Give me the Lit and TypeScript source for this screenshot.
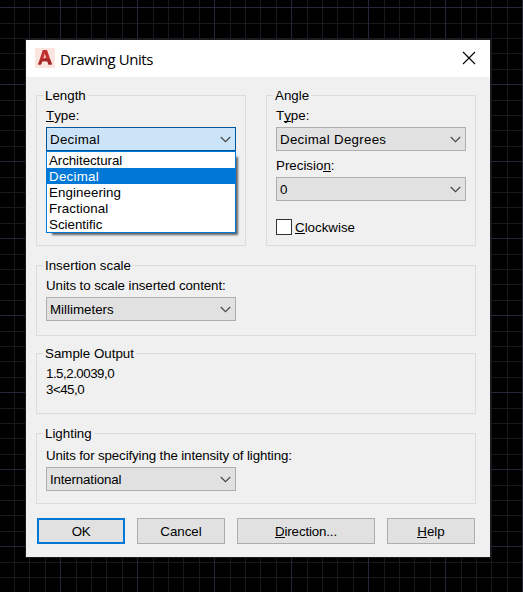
import { LitElement, html, css, svg, nothing } from "lit";
import { customElement, property } from "lit/decorators.js";

/** Renders a caption whose mnemonic letter follows an ampersand. */
const caption = (text: string) => {
  const at = text.indexOf("&");
  if (at < 0) return html`${text}`;
  return html`${text.slice(0, at)}<u>${text[at + 1]}</u>${text.slice(at + 2)}`;
};

/** Per-string letter spacing, in pixels, imitating hinted GDI advances. */
const tracking: Record<string, number> = {
  Decimal: 0.27,
  "Decimal Degrees": 0.27,
  Architectural: -0.07,
  Engineering: 0.08,
  Fractional: 0.07,
  International: -0.16,
};
const spaced = (text: string) =>
  html`<span class="text" style="letter-spacing:${tracking[text] ?? 0}px">${text}</span>`;

@customElement("group-box")
class GroupBox extends LitElement {
  @property() label = "";
  static styles = css`
    :host {
      display: block;
      box-sizing: border-box;
      border: 1px solid #dcdcdc;
      padding: 0 9px;
    }
    .legend {
      display: table;
      height: 16px;
      line-height: 16px;
      margin: -8px 0 4px -3px;
      padding: 0 2px;
      background: #f0f0f0;
      white-space: nowrap;
    }
  `;
  render() {
    return html`<div class="legend">${this.label}</div><slot></slot>`;
  }
}

@customElement("combo-box")
class ComboBox extends LitElement {
  @property() value = "";
  @property({ type: Array }) options: string[] = [];
  @property({ type: Boolean, reflect: true }) open = false;
  static styles = css`
    :host {
      display: block;
      position: relative;
      width: 190px;
      height: 24px;
    }
    .field {
      box-sizing: border-box;
      height: 24px;
      display: flex;
      align-items: center;
      justify-content: space-between;
      padding: 0 4px 0 3px;
      border: 1px solid #adadad;
      background: #e1e1e1;
      line-height: 16px;
    }
    .field .text {
      padding-top: 2px;
    }
    :host([open]) .field {
      border-color: #005499;
      background: #cce4f7;
    }
    .list {
      position: absolute;
      z-index: 1;
      top: 24px;
      left: 0;
      right: 0;
      border: 1px solid #0078d7;
      background: #fff;
      box-shadow: 4px 4px 2px -2px rgba(0, 0, 0, 0.6);
    }
    .item {
      height: 16px;
      line-height: 17px;
      padding-left: 2px;
    }
    .selected {
      background: #0078d7;
      color: #fff;
    }
  `;
  render() {
    return html`
      <div class="field">
        ${spaced(this.value)}
        <svg width="11" height="7" viewBox="0 0 11 7">
          <path d="M.8 1 5.5 5.7 10.2 1" fill="none" stroke="#444" stroke-width="1.1" />
        </svg>
      </div>
      ${this.open
        ? html`<div class="list">
            ${this.options.map(
              (o) => html`<div class="item ${o === this.value ? "selected" : ""}">${spaced(o)}</div>`
            )}
          </div>`
        : nothing}
    `;
  }
}

@customElement("app-root")
class AppRoot extends LitElement {
  static styles = css`
    :host {
      display: block;
      position: relative;
      box-sizing: border-box;
      width: 523px;
      height: 592px;
      overflow: hidden;
      padding: 40px 0 0 26px;
      background: #000;
      color: #000;
      font: 13.33px "Liberation Sans", Arial, sans-serif;
    }
    u {
      display: inline-block;
      height: 14px;
      line-height: 16px;
      vertical-align: top;
      text-decoration: none;
      box-shadow: inset 0 -1px 0 #000;
    }
    .canvas {
      position: absolute;
      inset: 0;
    }
    .dialog {
      position: relative;
      box-sizing: border-box;
      width: 464px;
      height: 517px;
      background: #f0f0f0;
      box-shadow: 0 0 0 1px #1b1c1e;
    }
    .title {
      box-sizing: border-box;
      height: 37px;
      display: flex;
      align-items: center;
      background: #fff;
      padding: 0 14px 1px 9px;
    }
    .name {
      flex: 1;
      margin-left: 5px;
      padding-top: 1px;
      font: 15px/20px "Open Sans", "Noto Sans", sans-serif;
      letter-spacing: -0.42px;
    }
    .body {
      display: grid;
      grid-template-columns: 210px 210px;
      grid-template-rows: 151px 90px 78px 90px 41px;
      column-gap: 20px;
      padding: 18px 10px 0;
    }
    .wide {
      grid-column: 1 / 3;
    }
    .insertion,
    .lighting {
      margin-top: 19px;
      height: 71px;
    }
    .sample {
      margin-top: 17px;
      height: 61px;
    }
    .label {
      height: 16px;
      line-height: 16px;
      margin-bottom: 3px;
      white-space: nowrap;
    }
    .next {
      margin-top: 7px;
    }
    .insertion .label {
      letter-spacing: -0.08px;
    }
    .lighting .label {
      padding-top: 2px;
      letter-spacing: -0.13px;
    }
    .output {
      line-height: 16px;
      margin-top: 2px;
      letter-spacing: -0.5px;
    }
    .check {
      display: flex;
      align-items: center;
      gap: 3px;
      margin-top: 18px;
      height: 16px;
      line-height: 16px;
    }
    .check .text {
      padding-top: 2px;
    }
    .box {
      box-sizing: border-box;
      width: 16px;
      height: 16px;
      border: 1px solid #333;
      background: #fff;
    }
    .buttons {
      display: flex;
      gap: 12px;
      padding: 14px 0 0 1px;
    }
    button {
      width: 88px;
      height: 26px;
      padding: 2px 0 0;
      border: 1px solid #adadad;
      border-radius: 0;
      background: #e1e1e1;
      color: #000;
      font: inherit;
      line-height: 16px;
    }
    .default {
      border: 2px solid #0078d7;
      letter-spacing: -0.5px;
    }
    .long {
      width: 138px;
      letter-spacing: -0.15px;
    }
  `;

  private grid() {
    const minor = [16, 31, 46, 62];
    return html`<svg class="canvas" width="523" height="592">
      <defs>
        <pattern id="grid" x="60" y="7" width="77" height="77" patternUnits="userSpaceOnUse">
          ${minor.map(
            (n) => svg`<rect x=${n} width="1" height="77" fill="#18191f" />
              <rect y=${n} width="77" height="1" fill="#18191f" />`
          )}
          <rect width="1" height="77" fill="#25263a" />
          <rect width="77" height="1" fill="#25263a" />
        </pattern>
      </defs>
      <rect width="523" height="592" fill="url(#grid)" />
    </svg>`;
  }

  render() {
    return html`
      ${this.grid()}
      <div class="dialog">
        <div class="title">
          <svg width="20" height="20" viewBox="0 0 20 20">
            <rect width="20" height="20" fill="#fbe5df" />
            <path d="M7.8 2h4.2L17 16.4h-3.6l-1-3.2H7.2L6 16.4H3z" fill="#c4302f" />
            <path d="M9.7 5.6 11.2 10 8.3 10.6z" fill="#f3c5bf" />
            <path d="M3 16.4 6 11.6 11.5 10.3 15.2 11.4 17 16.4h-3.6l-1-3.2H7.2L6 16.4z" fill="#a3262b" />
          </svg>
          <span class="name">Drawing Units</span>
          <svg width="14" height="14" viewBox="0 0 14 14">
            <path d="M1 1 13 13M13 1 1 13" stroke="#000" stroke-width="1.1" />
          </svg>
        </div>
        <div class="body">
          <group-box label="Length">
            <div class="label">${caption("&Type:")}</div>
            <combo-box
              open
              value="Decimal"
              .options=${["Architectural", "Decimal", "Engineering", "Fractional", "Scientific"]}
            ></combo-box>
          </group-box>
          <group-box label="Angle">
            <div class="label">${caption("T&ype:")}</div>
            <combo-box value="Decimal Degrees"></combo-box>
            <div class="label next">${caption("Precisio&n:")}</div>
            <combo-box value="0"></combo-box>
            <div class="check">
              <span class="box"></span><span class="text">${caption("&Clockwise")}</span>
            </div>
          </group-box>
          <group-box class="wide insertion" label="Insertion scale">
            <div class="label">Units to scale inserted content:</div>
            <combo-box value="Millimeters"></combo-box>
          </group-box>
          <group-box class="wide sample" label="Sample Output">
            <div class="output">1.5,2.0039,0<br />3&lt;45,0</div>
          </group-box>
          <group-box class="wide lighting" label="Lighting">
            <div class="label">Units for specifying the intensity of lighting:</div>
            <combo-box value="International"></combo-box>
          </group-box>
          <div class="wide buttons">
            <button class="default">OK</button>
            <button>Cancel</button>
            <button class="long">${caption("&Direction...")}</button>
            <button>${caption("&Help")}</button>
          </div>
        </div>
      </div>
    `;
  }
}
